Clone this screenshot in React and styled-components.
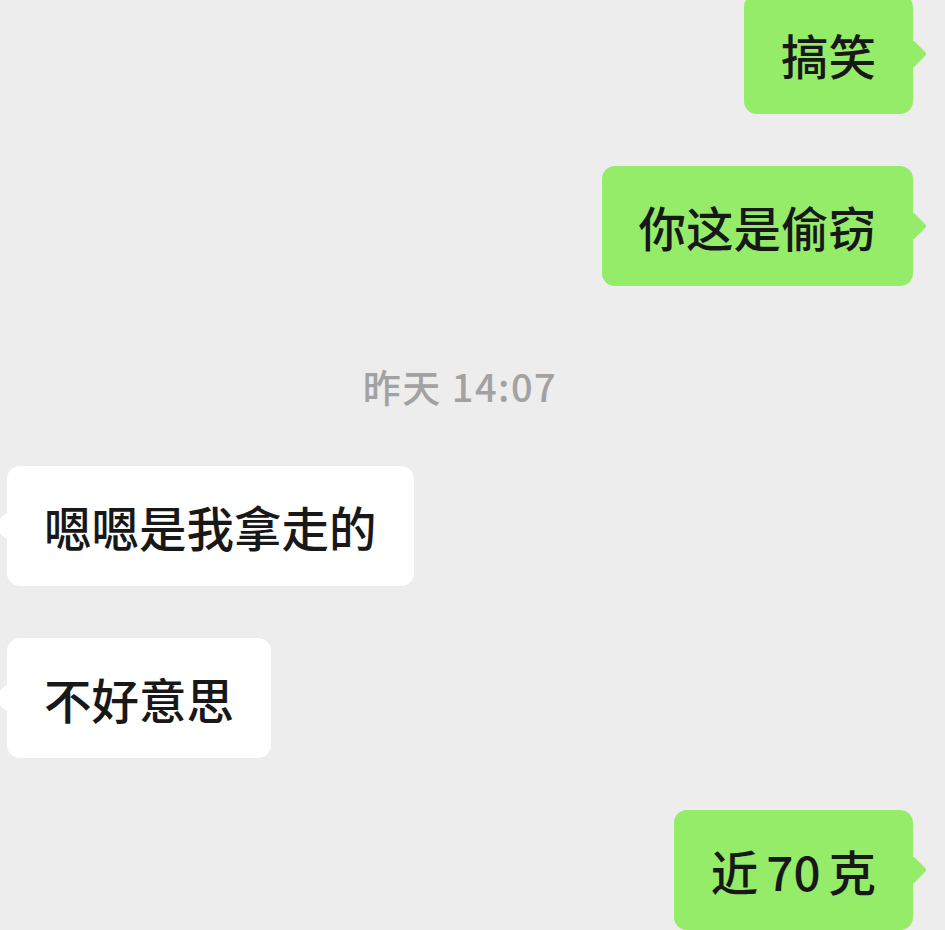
import React from "react";
import styled, { createGlobalStyle, css } from "styled-components";

const Global = createGlobalStyle`
  html, body {
    margin: 0;
    padding: 0;
    background: #ededed;
  }
  body {
    font-family: "Noto Sans CJK SC", "Noto Sans", sans-serif;
    overflow: hidden;
  }
`;

const Chat = styled.div`
  width: 945px;
  height: 930px;
  overflow: hidden;
  display: flex;
  flex-direction: column;
  gap: 52px;
  padding: 0 32px 0 7px;
  box-sizing: border-box;
`;

const Row = styled.div`
  display: flex;
  justify-content: ${(p) => (p.$mine ? "flex-end" : "flex-start")};
  margin-top: ${(p) => p.$offset || 0}px;
`;

const Bubble = styled.div`
  position: relative;
  height: 120px;
  display: flex;
  align-items: center;
  padding: 0 37px;
  border-radius: 13px;
  font-size: 47.5px;
  font-weight: 500;
  color: #181818;
  white-space: nowrap;
  background: ${(p) => (p.$mine ? "#95ec69" : "#ffffff")};

  &::after {
    content: "";
    position: absolute;
    top: 50%;
    width: 20px;
    height: 20px;
    border-radius: 3px;
    background: inherit;
    transform: translate(-50%, -50%) rotate(45deg);
    ${(p) =>
      p.$mine
        ? css`
            left: 100%;
          `
        : css`
            left: 0;
          `}
  }
`;

const Spaced = styled.span`
  margin: 0 8px;
`;

const Stamp = styled.div`
  text-align: center;
  font-size: 38px;
  font-weight: 500;
  letter-spacing: 1.5px;
  line-height: 40px;
  color: #a2a2a2;
  margin: 28px 0 8px;
`;

export default function App() {
  return (
    <>
      <Global />
      <Chat>
        <Row $mine $offset={-6}>
          <Bubble $mine>搞笑</Bubble>
        </Row>
        <Row $mine>
          <Bubble $mine>你这是偷窃</Bubble>
        </Row>
        <Stamp>昨天 14:07</Stamp>
        <Row>
          <Bubble>嗯嗯是我拿走的</Bubble>
        </Row>
        <Row>
          <Bubble>不好意思</Bubble>
        </Row>
        <Row $mine>
          <Bubble $mine>
            近<Spaced>70</Spaced>克
          </Bubble>
        </Row>
      </Chat>
    </>
  );
}
